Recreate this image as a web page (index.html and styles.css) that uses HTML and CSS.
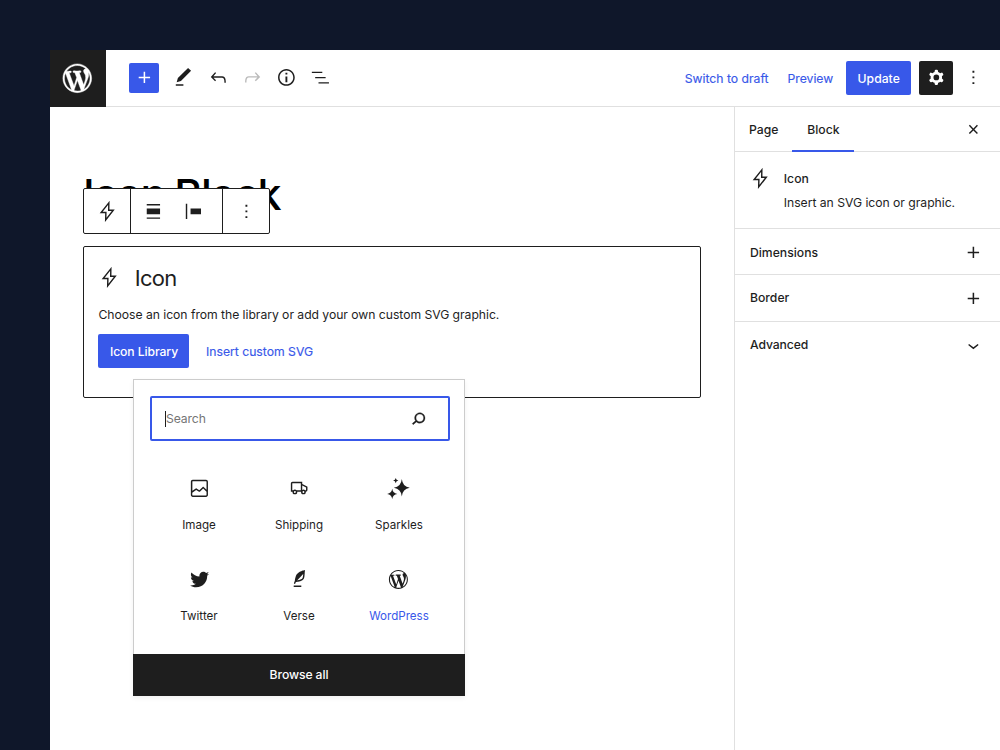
FILE: index.html
```html
<!DOCTYPE html>
<html lang="en">
<head>
<meta charset="utf-8">
<title>Edit Page</title>
<link rel="stylesheet" href="styles.css">
</head>
<body>
<svg class="sprite" aria-hidden="true">
  <symbol id="wordpress" viewBox="-2 -2 24 24"><path d="M20 10c0-5.51-4.49-10-10-10C4.48 0 0 4.49 0 10c0 5.52 4.48 10 10 10 5.51 0 10-4.48 10-10zM7.78 15.37L4.37 6.22c.55-.02 1.17-.08 1.17-.08.5-.06.44-1.13-.06-1.11 0 0-1.45.11-2.37.11-.18 0-.37 0-.58-.01C4.12 2.69 6.87 1.11 10 1.11c2.33 0 4.45.87 6.05 2.34-.68-.11-1.65.39-1.65 1.58 0 .74.45 1.36.9 2.1.35.61.55 1.36.55 2.46 0 1.49-1.4 5-1.4 5l-3.03-8.37c.54-.02.82-.17.82-.17.5-.05.44-1.25-.06-1.22 0 0-1.44.12-2.38.12-.87 0-2.33-.12-2.33-.12-.5-.03-.56 1.2-.06 1.22l.92.08 1.26 3.41zM17.41 10c.24-.64.74-1.87.43-4.25.7 1.29 1.05 2.71 1.05 4.25 0 3.29-1.73 6.24-4.4 7.78.97-2.59 1.94-5.2 2.92-7.78zM6.1 18.09C3.12 16.65 1.11 13.53 1.11 10c0-1.3.23-2.48.72-3.59C3.25 10.3 4.67 14.2 6.1 18.09zm4.03-6.63l2.58 6.98c-.86.29-1.76.45-2.71.45-.79 0-1.57-.11-2.29-.33.81-2.38 1.62-4.74 2.42-7.1z"/></symbol>
  <symbol id="plus" viewBox="0 0 24 24"><path d="M18 11.2h-5.2V6h-1.6v5.2H6v1.6h5.2V18h1.6v-5.2H18z"/></symbol>
  <symbol id="more" viewBox="0 0 24 24"><path d="M13 19h-2v-2h2v2zm0-6h-2v-2h2v2zm0-6h-2V5h2v2z"/></symbol>
  <symbol id="bolt" viewBox="0 0 24 24"><path d="M13.5 3 5.4 13.2h5L10.2 21 18.2 10.8h-4.8z" fill="none" stroke="currentColor" stroke-width="1.5"/></symbol>
</svg>
<div class="editor">
  <header class="topbar">
    <a class="logo"><svg><use href="#wordpress"/></svg></a>
    <div class="tools">
      <button class="add"><svg class="icon"><use href="#plus"/></svg></button>
      <svg class="icon" viewBox="0 0 24 24"><path d="M20.1 5.1L16.9 2 6.2 12.7l-1.3 4.4 4.5-1.3L20.1 5.1zM4 20.8h8v-1.5H4v1.5z"/></svg>
      <svg class="icon" viewBox="0 0 24 24"><path d="M18.3 11.7c-.6-.6-1.4-.9-2.3-.9H6.7l2.9-3.3-1.1-1-4.5 5L8.5 16l1-1-2.7-2.7H16c.5 0 .9.2 1.3.5 1 1 1 3.4 1 4.5v.3h1.5v-.2c0-1.5 0-4.3-1.5-5.7z"/></svg>
      <svg class="icon disabled" viewBox="0 0 24 24"><path d="M15.6 6.5l-1.1 1 2.9 3.3H8c-.9 0-1.7.3-2.3.9-1.4 1.5-1.4 4.2-1.4 5.6v.2h1.5v-.3c0-1.1 0-3.5 1-4.5.3-.3.7-.5 1.3-.5h9.2L14.5 15l1.1 1.1 4.6-4.6-4.6-5z"/></svg>
      <svg class="icon" viewBox="0 0 24 24"><path d="M12 3.2c-4.8 0-8.8 3.9-8.8 8.8 0 4.8 3.9 8.8 8.8 8.8 4.8 0 8.8-3.9 8.8-8.8 0-4.8-4-8.8-8.8-8.8zm0 16c-4 0-7.2-3.3-7.2-7.2C4.8 8 8 4.8 12 4.8s7.2 3.3 7.2 7.2c0 4-3.2 7.2-7.2 7.2zM11 17h2v-6h-2v6zm0-8h2V7h-2v2z"/></svg>
      <svg class="icon" viewBox="0 0 24 24"><path d="M3 6h11v1.5H3V6Zm3.5 5.5h11V13h-11v-1.5ZM21 17H10v1.5h11V17Z"/></svg>
    </div>
    <div class="actions">
      <a class="link draft">Switch to draft</a>
      <a class="link preview">Preview</a>
      <button class="update">Update</button>
      <button class="settings"><svg class="icon" viewBox="0 0 24 24"><path fill-rule="evenodd" d="M10.289 4.836A1 1 0 0111.275 4h1.306a1 1 0 01.987.836l.244 1.466c.787.26 1.503.679 2.108 1.218l1.393-.522a1 1 0 011.216.437l.653 1.13a1 1 0 01-.23 1.273l-1.148.944a6.025 6.025 0 010 2.435l1.149.946a1 1 0 01.23 1.272l-.653 1.13a1 1 0 01-1.216.437l-1.394-.522c-.605.54-1.32.958-2.108 1.218l-.244 1.466a1 1 0 01-.987.836h-1.306a1 1 0 01-.986-.836l-.244-1.466a5.995 5.995 0 01-2.108-1.218l-1.394.522a1 1 0 01-1.217-.436l-.653-1.131a1 1 0 01.23-1.272l1.149-.946a6.026 6.026 0 010-2.435l-1.148-.944a1 1 0 01-.23-1.272l.653-1.131a1 1 0 011.217-.437l1.393.522a5.994 5.994 0 012.108-1.218l.244-1.466zM14.929 12a3 3 0 11-6 0 3 3 0 016 0z"/></svg></button>
      <svg class="icon"><use href="#more"/></svg>
    </div>
  </header>
  <div class="body">
    <main class="canvas">
      <h1 class="title">Icon Block</h1>
      <div class="toolbar">
        <div class="group single"><svg class="icon"><use href="#bolt"/></svg></div>
        <div class="group pair">
          <svg class="icon" viewBox="0 0 24 24"><path d="M5 15h14V9H5v6zm0 4.8h14v-1.5H5v1.5zM5 4.2v1.5h14V4.2H5z"/></svg>
          <svg class="icon" viewBox="0 0 24 24"><path d="M9 9v6h11V9H9zM4 20h1.5V4H4v16z"/></svg>
        </div>
        <div class="group single"><svg class="icon"><use href="#more"/></svg></div>
      </div>
      <section class="placeholder">
        <h2 class="heading"><svg class="icon"><use href="#bolt"/></svg>Icon</h2>
        <p class="help">Choose an icon from the library or add your own custom SVG graphic.</p>
        <div class="choices">
          <button class="library">Icon Library</button>
          <a class="link insert">Insert custom SVG</a>
        </div>
      </section>
      <div class="popover">
        <div class="search"><span class="hint">Search</span><svg class="icon" viewBox="0 0 24 24"><path d="M13.5 6C10.5 6 8 8.5 8 11.5c0 1.1.3 2.1.9 3l-3.4 3 1 1.1 3.4-2.9c1 .9 2.2 1.4 3.6 1.4 3 0 5.5-2.5 5.5-5.5C19 8.5 16.5 6 13.5 6zm0 9.5c-2.2 0-4-1.8-4-4s1.8-4 4-4 4 1.8 4 4-1.8 4-4 4z" stroke="currentColor" stroke-width=".3"/></svg></div>
        <div class="grid">
          <div class="item"><svg class="icon" viewBox="0 0 24 24"><path d="M19 3H5c-1.1 0-2 .9-2 2v14c0 1.1.9 2 2 2h14c1.1 0 2-.9 2-2V5c0-1.1-.9-2-2-2zM5 4.5h14c.3 0 .5.2.5.5v8.4l-3-2.9c-.3-.3-.8-.3-1 0L11.9 14 9 12c-.3-.2-.6-.2-.8 0l-3.6 2.6V5c-.1-.3.1-.5.4-.5zm14 15H5c-.3 0-.5-.2-.5-.5v-2.4l4.1-3 3 1.9c.3.2.7.2.9-.1L16 12l3.5 3.4V19c0 .3-.2.5-.5.5z"/></svg><span class="label">Image</span></div>
          <div class="item"><svg class="icon" viewBox="0 0 24 24"><path d="M3 6.75C3 5.784 3.784 5 4.75 5H15V7.313l.05.027 5.056 2.73.394.212v3.468a1.75 1.75 0 01-1.75 1.75h-.012a2.5 2.5 0 11-4.975 0H9.737a2.5 2.5 0 11-4.975 0H3V6.75zM13.5 14V6.5H4.75a.25.25 0 00-.25.25V14h.965a2.493 2.493 0 011.785-.75c.7 0 1.332.287 1.785.75H13.5zm4.535 0h.715a.25.25 0 00.25-.25v-2.573l-4-2.16v4.568a2.487 2.487 0 011.25-.335c.7 0 1.332.287 1.785.75zM6.282 15.5a1.002 1.002 0 00.968 1.25 1 1 0 10-.968-1.25zm9 0a1 1 0 101.937.498 1 1 0 00-1.938-.498z"/></svg><span class="label">Shipping</span></div>
          <div class="item inset"><svg class="icon" viewBox="0 0 24 24"><path d="M15.6 2Q16.4 10.2 24 11.200Q16.400 12.200 15.600 20.400Q14.800 12.200 7.200 11.200Q14.800 10.200 15.600 2zM5.500 12.400Q6.200 17.200 10.800 17.800Q6.200 18.400 5.500 23.200Q4.800 18.400.2 17.800Q4.800 17.200 5.500 12.400zM9.200 1Q9.600 3.500 12 3.800Q9.600 4.100 9.200 6.600Q8.800 4.100 6.400 3.800Q8.800 3.500 9.200 1z"/></svg><span class="label">Sparkles</span></div>
          <div class="item"><svg class="icon" viewBox="0 0 24 24"><path d="M22.23,5.924c-0.736,0.326-1.527,0.547-2.357,0.646c0.847-0.508,1.498-1.312,1.804-2.27c-0.793,0.47-1.671,0.812-2.606,0.996C18.324,4.498,17.257,4,16.077,4c-2.266,0-4.103,1.837-4.103,4.103c0,0.322,0.036,0.635,0.106,0.935C8.67,8.867,5.647,7.234,3.623,4.751C3.27,5.357,3.067,6.062,3.067,6.814c0,1.424,0.724,2.679,1.825,3.415c-0.673-0.021-1.305-0.206-1.859-0.513c0,0.017,0,0.034,0,0.052c0,1.988,1.414,3.647,3.292,4.023c-0.344,0.094-0.707,0.144-1.081,0.144c-0.264,0-0.521-0.026-0.772-0.074c0.522,1.63,2.038,2.816,3.833,2.85c-1.404,1.1-3.174,1.756-5.096,1.756c-0.331,0-0.658-0.019-0.979-0.057c1.816,1.164,3.973,1.843,6.29,1.843c7.547,0,11.675-6.252,11.675-11.675c0-0.178-0.004-0.355-0.012-0.531C20.985,7.47,21.68,6.747,22.23,5.924z"/></svg><span class="label">Twitter</span></div>
          <div class="item"><svg class="icon" viewBox="0 0 24 24"><path d="M17.8 2l-.9.3c-.1 0-3.6 1-5.2 2.1C10 5.5 9.3 6.5 8.9 7.1c-.6.9-1.7 4.7-1.7 6.3l-.9 2.3c-.2.4 0 .8.4 1 .1 0 .2.1.3.1.3 0 .6-.2.7-.5l.6-1.5c.3 0 .7-.1 1.2-.2.7-.1 1.4-.3 2.2-.5.8-.2 1.6-.5 2.4-.8.7-.3 1.4-.7 1.9-1.2s.8-1.2 1-1.9c.2-.7.3-1.6.4-2.4.1-.8.1-1.7.2-2.5 0-.8.1-1.5.2-2.1V2zm-1.9 5.6c-.1.8-.2 1.5-.3 2.1-.2.6-.4 1-.6 1.3-.3.3-.8.6-1.4.9-.7.3-1.4.5-2.2.8-.6.2-1.3.3-1.8.4L15 7.5c.3-.3.6-.7 1-1.1 0 .4 0 .8-.1 1.2zM6 20h8v-1.5H6V20z"/></svg><span class="label">Verse</span></div>
          <div class="item inset active"><svg class="icon"><use href="#wordpress"/></svg><span class="label">WordPress</span></div>
        </div>
        <button class="browse">Browse all</button>
      </div>
    </main>
    <aside class="sidebar">
      <nav class="tabs">
        <span class="tab page">Page</span>
        <span class="tab selected">Block</span>
        <svg class="icon close" viewBox="0 0 24 24"><path d="M12 13.06l3.712 3.713 1.061-1.06L13.061 12l3.712-3.712-1.06-1.06L12 10.938 8.288 7.227l-1.061 1.06L10.939 12l-3.712 3.712 1.06 1.061L12 13.061z"/></svg>
      </nav>
      <section class="card">
        <svg class="icon"><use href="#bolt"/></svg>
        <div class="info"><h3 class="name">Icon</h3><p class="desc">Insert an SVG icon or graphic.</p></div>
      </section>
      <div class="panel dimensions">Dimensions<svg class="icon"><use href="#plus"/></svg></div>
      <div class="panel border">Border<svg class="icon"><use href="#plus"/></svg></div>
      <div class="panel advanced">Advanced<svg class="icon" viewBox="0 0 24 24"><path d="M17.5 11.6L12 16l-5.5-4.4.9-1.2L12 14l4.5-3.6 1 1.2z"/></svg></div>
    </aside>
  </div>
</div>
</body>
</html>
```
FILE: styles.css
```css
* { box-sizing: border-box; }
body {
  margin: 0;
  height: 750px;
  overflow: hidden;
  padding: 50px 0 0 50px;
  background: #0f172a;
  color: #1e1e1e;
  font: 12.2px/16px Inter, "Liberation Sans", sans-serif;
}
h1, h2, h3, p { margin: 0; font-weight: 400; white-space: nowrap; }
button { border: 0; padding: 0; color: #fff; font: inherit; font-weight: 500; border-radius: 2px; display: flex; align-items: center; justify-content: center; }
svg { display: block; fill: currentColor; flex: none; }
.sprite { position: absolute; width: 0; height: 0; }
.icon { width: 22.8px; height: 22.8px; }
.link { color: #3858e9; white-space: nowrap; -webkit-text-stroke: .15px; }
.editor { height: 700px; display: flex; flex-direction: column; background: #fff; }
.topbar { height: 57px; flex: none; display: flex; align-items: flex-start; border-bottom: 1px solid #e0e0e0; }
.logo { width: 56px; height: 57px; background: #1e1e1e; color: #fff; display: flex; align-items: center; justify-content: center; }
.logo svg { width: 34.5px; height: 34.5px; margin-right: 1px; stroke: currentColor; stroke-width: .3px; }
.tools { height: 55px; margin-left: 23px; display: flex; align-items: center; gap: 11.4px; }
.add { width: 30px; height: 30px; margin-right: 2px; background: #3858e9; }
.disabled { color: #bbb; }
.actions { height: 55px; margin-left: auto; display: flex; align-items: center; padding-right: 15px; }
.draft, .preview { padding-top: 2px; }
.draft { margin-right: 19px; }
.preview { margin-right: 13px; }
.update { width: 65px; height: 34px; padding-top: 2px; background: #3858e9; margin-right: 8px; }
.settings { width: 34px; height: 34px; background: #1e1e1e; margin-right: 9px; }
.body { flex: 1; display: flex; }
.canvas { flex: 1; position: relative; padding: 62px 33px 0; }
.title { height: 50px; color: #000; font-size: 43px; line-height: 50px; font-weight: 500; letter-spacing: -1.7px; }
.toolbar { position: absolute; left: 33px; top: 81px; width: 187px; height: 46px; display: flex; background: #fff; border: 1px solid #1e1e1e; border-radius: 2px; }
.group { display: flex; align-items: center; justify-content: center; }
.single { width: 46px; }
.pair { width: 93px; gap: 17.5px; padding-right: 6px; border: solid #1e1e1e; border-width: 0 1px; }
.placeholder { margin-top: 27px; height: 152px; width: 618px; border: 1px solid #1e1e1e; border-radius: 2px; padding: 17px 14px; }
.heading { display: flex; align-items: center; gap: 14px; height: 28px; font-size: 22px; letter-spacing: -.7px; }
.heading .icon { margin-top: -1px; }
.help { margin-top: 15px; padding-left: .5px; letter-spacing: -.04px; }
.choices { display: flex; align-items: center; margin-top: 11px; gap: 17px; }
.insert { padding-top: 1px; }
.library { width: 91px; height: 34px; padding: 1px 0 0 1px; background: #3858e9; letter-spacing: -.1px; }
.popover { position: absolute; left: 83px; top: 272px; width: 332px; height: 317px; background: #fff; border: 1px solid #ccc; border-bottom: 0; box-shadow: 0 2px 5px rgba(0,0,0,.06); display: flex; flex-direction: column; }
.search { flex: none; margin: 16px 14px 0 16px; height: 45px; border: 2px solid #3858e9; border-radius: 2px; display: flex; align-items: center; justify-content: space-between; padding: 0 18px 0 13px; color: #757575; }
.search .icon { color: #1e1e1e; }
.hint { border-left: 1px solid #1e1e1e; letter-spacing: -.1px; }
.grid { display: grid; grid-template: 91px 66px / repeat(3, 100px); justify-content: center; padding-top: 35.5px; }
.item { display: flex; flex-direction: column; align-items: center; gap: 17.7px; font-size: 11.6px; }
.inset .icon { margin-right: 1px; }
.active .label { color: #3858e9; }
.browse { flex: none; margin: auto -1px 0; height: 42px; background: #1e1e1e; border-radius: 0; letter-spacing: -.1px; }
.sidebar { width: 266px; border-left: 1px solid #e0e0e0; }
.tabs { height: 45px; display: flex; border-bottom: 1px solid #e0e0e0; font-weight: 500; align-items: center; }
.tab { height: 45px; display: flex; align-items: center; padding-top: 1px; }
.page { padding: 1px 14px 0; }
.selected { width: 62px; justify-content: center; padding-top: 3px; border-bottom: 2px solid #3858e9; }
.close { margin: 0 15px 0 auto; }
.card { height: 77px; display: flex; padding: 15px 14px; gap: 12px; border-bottom: 1px solid #e0e0e0; }
.name { font-weight: 500; font-size: 12.2px; padding-top: 4px; }
.desc { margin-top: 8px; letter-spacing: -.03px; }
.panel { height: 46px; display: flex; align-items: center; justify-content: space-between; padding: 0 15px; border-bottom: 1px solid #e0e0e0; font-weight: 500; }
.dimensions { padding-top: 2px; }
.border { height: 47px; }
.advanced { border: 0; letter-spacing: -.1px; }
```
